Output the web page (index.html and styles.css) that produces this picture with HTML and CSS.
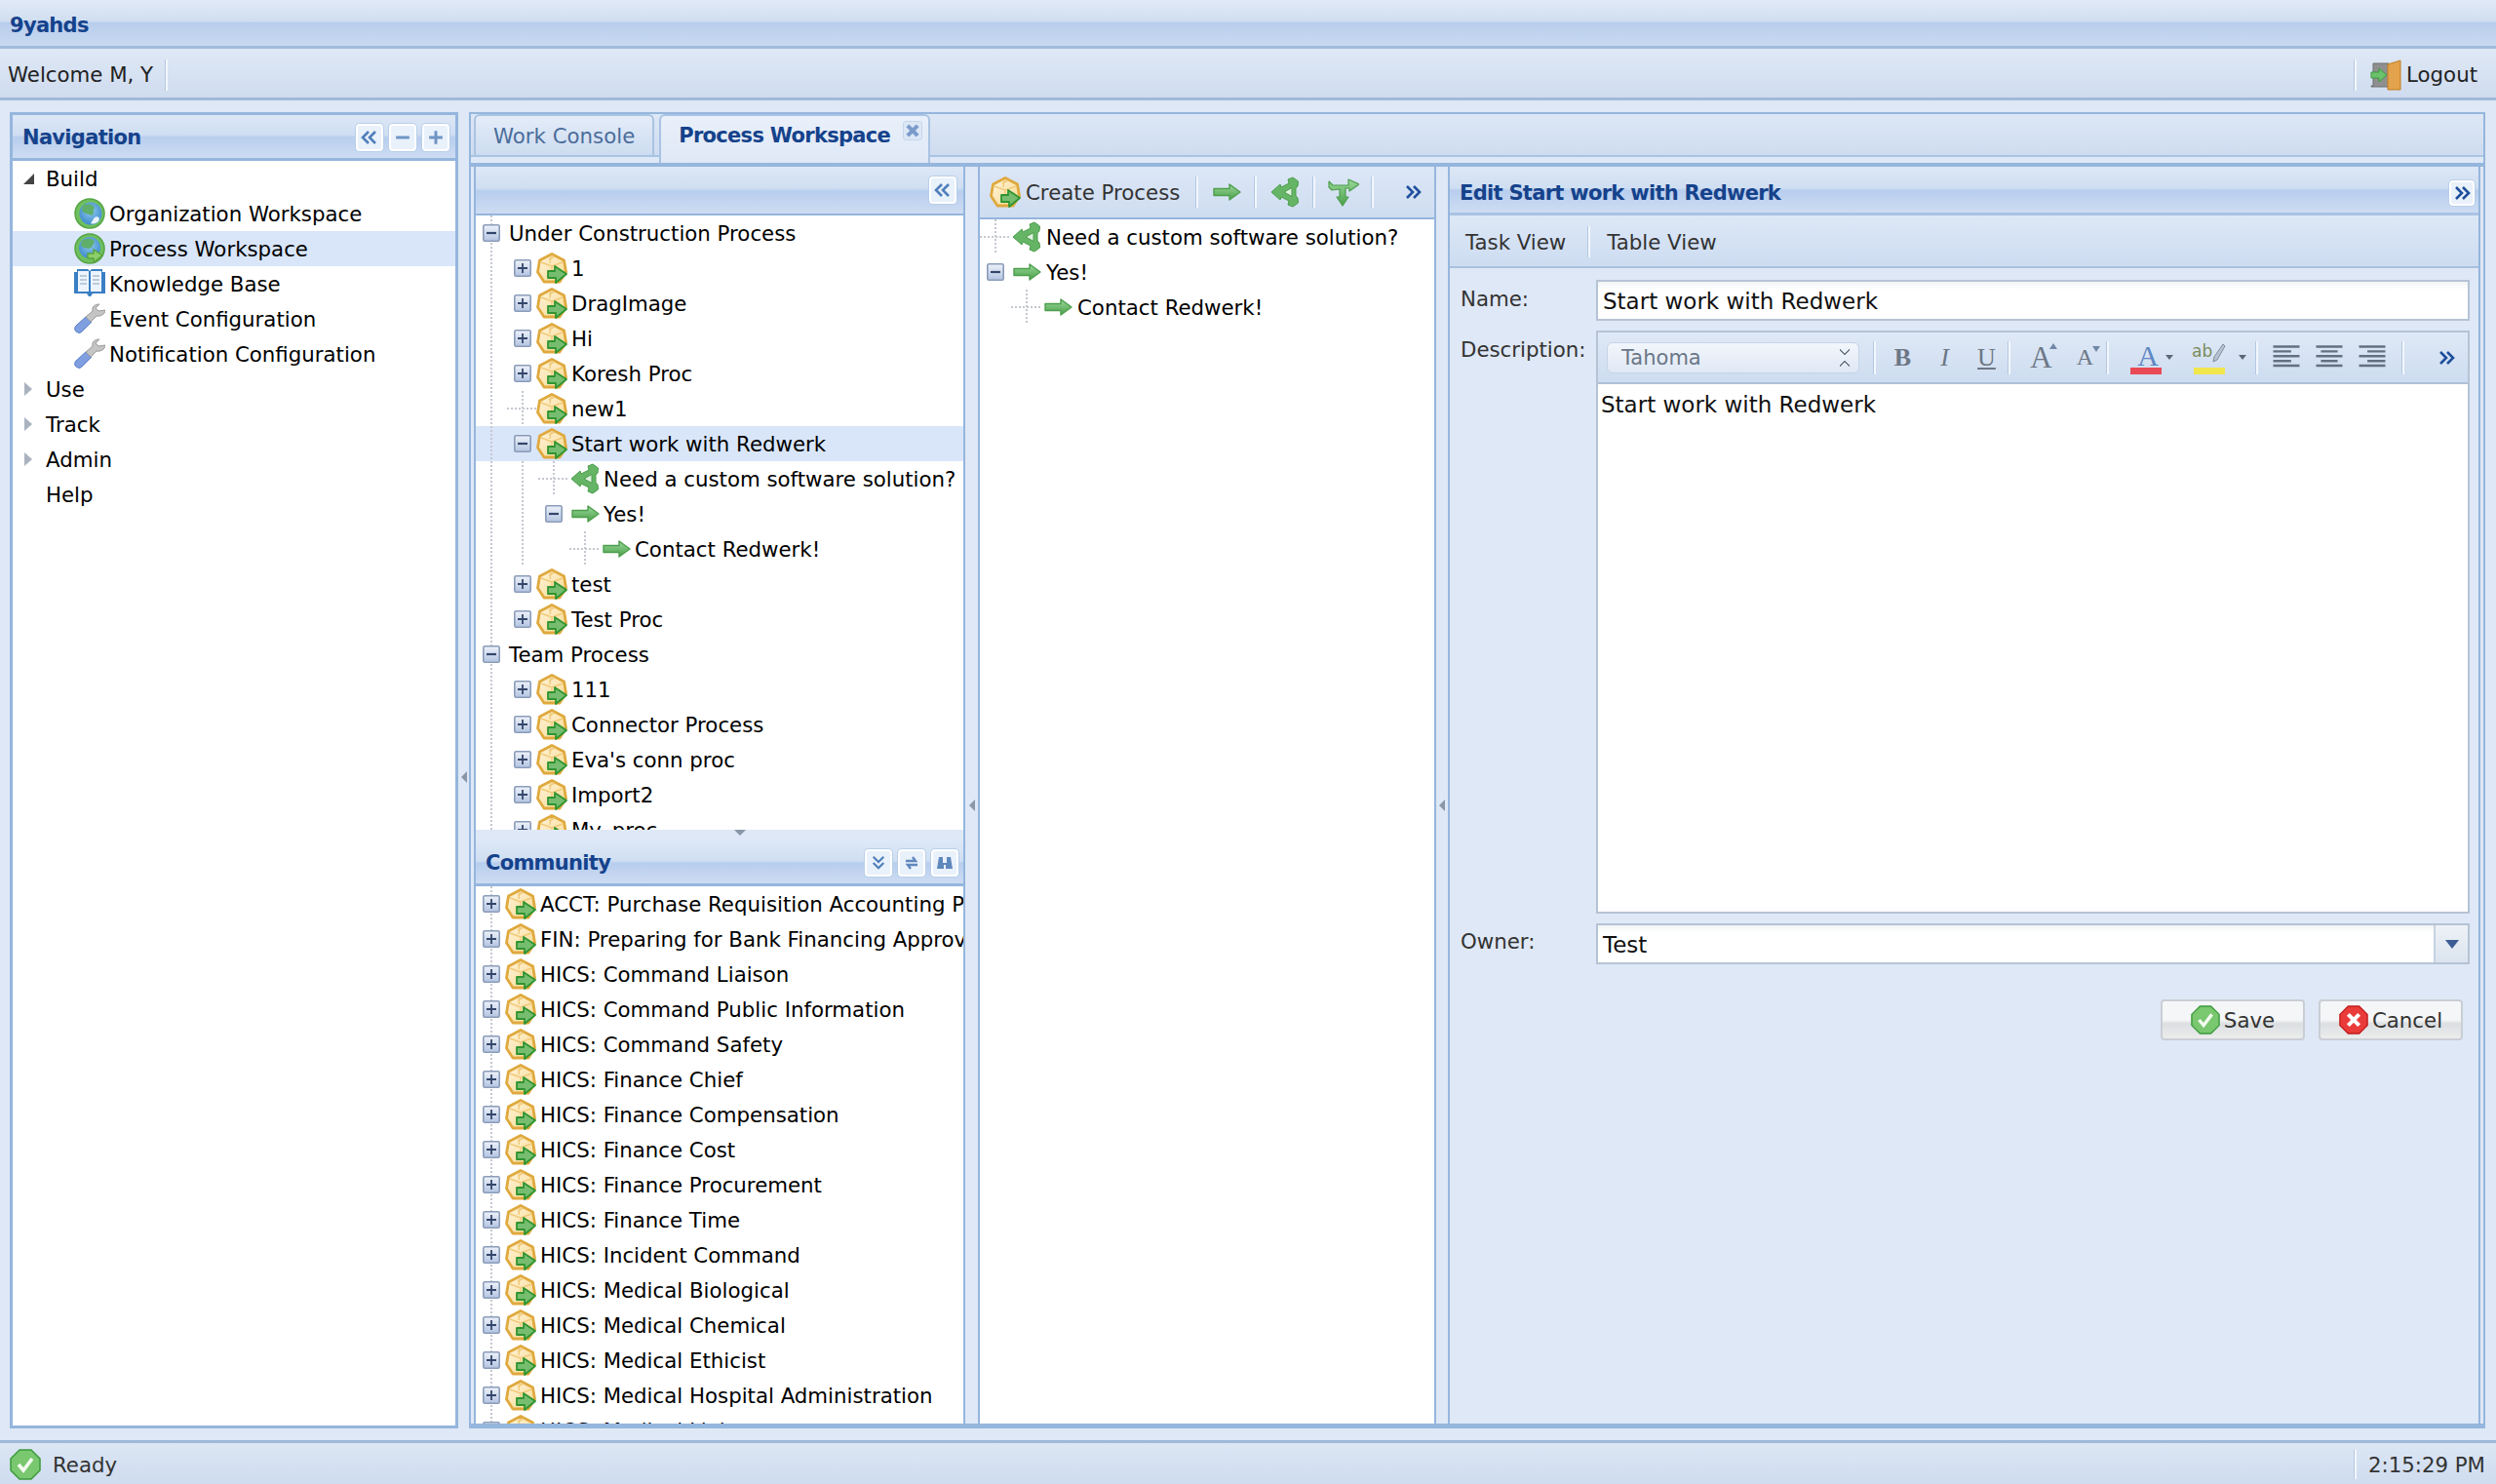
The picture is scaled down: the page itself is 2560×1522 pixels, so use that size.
FILE: index.html
```html
<!DOCTYPE html>
<html lang="en">
<head>
<meta charset="utf-8">
<title>9yahds</title>
<link rel="stylesheet" href="styles.css">
</head>
<body>
<svg class="defs" width="0" height="0">
  <defs>
    <linearGradient id="gGreen" x1="0" y1="0" x2="0" y2="1"><stop offset="0" stop-color="#9ad89a"/><stop offset="1" stop-color="#4aa04a"/></linearGradient>
    <linearGradient id="gGold" x1="0" y1="0" x2="1" y2="1"><stop offset="0" stop-color="#fff6df"/><stop offset="1" stop-color="#f8d78c"/></linearGradient>
    <linearGradient id="gEx" x1="0" y1="0" x2="0" y2="1"><stop offset="0" stop-color="#eef2fa"/><stop offset="1" stop-color="#b3c4e1"/></linearGradient>
    <radialGradient id="gBlue" cx=".5" cy=".4" r=".6"><stop offset="0" stop-color="#8fc8ef"/><stop offset="1" stop-color="#3d8bcb"/></radialGradient>
    <symbol id="i-proc" viewBox="0 0 32 32">
      <polygon points="16,1.5 28.5,8 30.5,20 24,30 8,30 1.5,20 3.5,8" fill="url(#gGold)" stroke="#dfa93e" stroke-width="2.8" stroke-linejoin="round"/>
      <path d="M5 10 L16 14 L27 10 M16 14 V22 M13 7 L19 4 M15 4 L14 11" fill="none" stroke="#f0ca7a" stroke-width="1.4"/>
      <path d="M12 19 H19 V14 L31 22 L20 31 V26 H12Z" fill="#76bd70" stroke="#2f942f" stroke-width="1.8" stroke-linejoin="round"/>
    </symbol>
    <symbol id="i-globe" viewBox="0 0 32 32">
      <circle cx="16" cy="16" r="15" fill="#6fbf5f" stroke="#55a545" stroke-width="1.5"/>
      <circle cx="17" cy="16" r="11.5" fill="url(#gBlue)"/>
      <path d="M9 8 C14 5 20 7 21 10 C18 14 22 15 18 18 C14 16 10 16 8 13Z" fill="#5fae6a"/>
      <path d="M21 20 C25 18 27 21 25 24 C22 27 18 27 17 26Z" fill="#e9f3fb"/>
    </symbol>
    <symbol id="i-globep" viewBox="0 0 32 32">
      <circle cx="16" cy="16" r="15" fill="#6fbf5f" stroke="#55a545" stroke-width="1.5"/>
      <circle cx="16" cy="15" r="11" fill="url(#gBlue)"/>
      <path d="M8 8 C14 4 20 6 21 9 C18 13 20 14 15 16 C12 15 9 15 7 13Z" fill="#5fae6a"/>
      <path d="M14 21 H20 V17 L29 23 L20 30 V26 H14Z" fill="#8ccf6a" stroke="#5ba53e" stroke-width="1.4"/>
    </symbol>
    <symbol id="i-book" viewBox="0 0 32 32">
      <path d="M0 4 H3 V1 H14 L16 3 L18 1 H29 V4 H32 V26 H19 L17 29 H15 L13 26 H0Z" fill="#3a7fc4"/>
      <path d="M4 3 H15 V24 H4Z M17 3 H28 V24 H17Z" fill="#eef4fb"/>
      <path d="M6 8 H13 M6 12 H13 M6 16 H13 M19 8 H26 M19 12 H26 M19 16 H26" stroke="#a9bdd2" stroke-width="1.6"/>
    </symbol>
    <symbol id="i-wrench" viewBox="0 0 32 32">
      <path d="M4 30 C0 29 0 25 2 23 L13 13 L18 19 L8 29 C7 30 5 31 4 30Z" fill="#7f9fe0" stroke="#5b7fc6" stroke-width="1"/>
      <path d="M12 14 L19 8 C18 4 21 1 26 1 L22 5 L25 8 L32 7 C32 11 27 14 23 13 L17 19Z" fill="#c4c4c4" stroke="#9a9a9a" stroke-width="1"/>
    </symbol>
    <symbol id="i-arrow" viewBox="0 0 32 32">
      <path d="M3 12.5 H19 V8 L30 16 L19 24 V19.5 H3Z" fill="url(#gGreen)" stroke="#4d9e4d" stroke-width="1.4" stroke-linejoin="round"/>
    </symbol>
    <symbol id="i-dec" viewBox="0 0 32 32">
      <path fill-rule="evenodd" d="M2 16 L11 8 L12 11 L20 7 L19 3 L24 1 L29.5 5 L29 10 L27 12 V20 L29 22 L29.5 27 L24 31 L19 29 L20 25 L12 21 L11 24Z" fill="#66b566" stroke="#4b9c4b" stroke-width="1" stroke-linejoin="round"/>
      <path d="M15 16 L23 11.5 V20.5Z" fill="#dff0df" stroke="#4b9c4b" stroke-width="1"/>
    </symbol>
    <symbol id="i-fork" viewBox="0 0 32 32">
      <path d="M1 5 L5 9 H21 V3 L32 8 L22 15 V12 H18 V21 H21 L15 30 L9 21 H12 V13 L4 14 L1 11Z" fill="url(#gGreen)" stroke="#4d9e4d" stroke-width="1.2" stroke-linejoin="round"/>
    </symbol>
    <symbol id="i-door" viewBox="0 0 32 32">
      <path d="M3 4 H19 V28 H1 V27 H3Z" fill="#8f8f8f" stroke="#6f6f6f" stroke-width="1"/>
      <path d="M18 5 L31 1 V31 H18Z" fill="#e3a24c" stroke="#c27e22" stroke-width="1"/>
      <path d="M1 13 H9 V9 L17 16 L9 23 V19 H1Z" fill="#6cc26c" stroke="#3d9b3d" stroke-width="1"/>
    </symbol>
    <symbol id="i-ok" viewBox="0 0 32 32">
      <polygon points="10,1 22,1 31,10 31,22 22,31 10,31 1,22 1,10" fill="#79c76f" stroke="#3d9b3d" stroke-width="1.5" stroke-linejoin="round"/>
      <path d="M9 16 L14 22 L23 10" fill="none" stroke="#f2faf0" stroke-width="3.6"/>
    </symbol>
    <symbol id="i-no" viewBox="0 0 32 32">
      <polygon points="10,1 22,1 31,10 31,22 22,31 10,31 1,22 1,10" fill="#ea3b3b" stroke="#c21d1d" stroke-width="1.5" stroke-linejoin="round"/>
      <path d="M10 10 L22 22 M22 10 L10 22" fill="none" stroke="#fff" stroke-width="4.4"/>
    </symbol>
    <symbol id="x-plus" viewBox="0 0 18 18">
      <rect x=".8" y=".8" width="16.4" height="16.4" rx="1.5" fill="url(#gEx)" stroke="#8b9cb9" stroke-width="1.6"/>
      <path d="M4 9 H14 M9 4 V14" stroke="#34466b" stroke-width="1.8"/>
    </symbol>
    <symbol id="x-minus" viewBox="0 0 18 18">
      <rect x=".8" y=".8" width="16.4" height="16.4" rx="1.5" fill="url(#gEx)" stroke="#8b9cb9" stroke-width="1.6"/>
      <path d="M4 9 H14" stroke="#34466b" stroke-width="2.2"/>
    </symbol>
    <symbol id="c-left" viewBox="0 0 18 14"><path d="M8 1 L2 7 L8 13 M15 1 L9 7 L15 13" fill="none" stroke="#4f7fba" stroke-width="2.6"/></symbol>
    <symbol id="c-right" viewBox="0 0 18 14"><path d="M3 1 L9 7 L3 13 M10 1 L16 7 L10 13" fill="none" stroke="#1f4f9c" stroke-width="2.6"/></symbol>
    <symbol id="c-down" viewBox="0 0 16 18"><path d="M2 2 L8 8 L14 2 M2 9 L8 15 L14 9" fill="none" stroke="#4f7fba" stroke-width="2.4"/></symbol>
    <symbol id="c-sync" viewBox="0 0 16 16"><path d="M2 6 H12 L9 2 M14 10 H4 L7 14" fill="none" stroke="#5f88bd" stroke-width="2.4"/></symbol>
    <symbol id="c-bino" viewBox="0 0 18 16"><path d="M3 2 H7 V8 H11 V2 H15 L17 14 H10 V10 H8 V14 H1Z" fill="#5f88bd"/></symbol>
    <symbol id="c-minus" viewBox="0 0 14 14"><path d="M1 7 H13" stroke="#6f95c5" stroke-width="2.6"/></symbol>
    <symbol id="c-plus" viewBox="0 0 14 14"><path d="M1 7 H13 M7 1 V13" stroke="#6f95c5" stroke-width="2.6"/></symbol>
    <symbol id="c-x" viewBox="0 0 14 14"><path d="M3 3 L11 11 M11 3 L3 11" stroke="#7b9ccb" stroke-width="3.2"/></symbol>
    <symbol id="a-l" viewBox="0 0 24 22"><path d="M1 2 H23 M1 6 H16 M1 10 H23 M1 14 H16 M1 18 H23" stroke="#62707f" stroke-width="2"/></symbol>
    <symbol id="a-c" viewBox="0 0 24 22"><path d="M1 2 H23 M5 6 H19 M1 10 H23 M5 14 H19 M1 18 H23" stroke="#62707f" stroke-width="2"/></symbol>
    <symbol id="a-r" viewBox="0 0 24 22"><path d="M1 2 H23 M8 6 H23 M1 10 H23 M8 14 H23 M1 18 H23" stroke="#62707f" stroke-width="2"/></symbol>
    <symbol id="pen" viewBox="0 0 14 20"><path d="M11 1 L13 3 L5 17 L1 19 L2 14Z" fill="#b9c4d2" stroke="#7f8a9a"/></symbol>
  </defs>
</svg>

<header class="appbar"><span class="apptitle">9yahds</span></header>

<div class="topbar">
  <span class="welcome">Welcome M, Y</span>
  <span class="sep"></span>
  <span class="grow"></span>
  <span class="sep"></span>
  <svg class="ico ico-logout"><use href="#i-door"/></svg>
  <span class="logout">Logout</span>
</div>

<main class="main">
  <aside class="west">
    <div class="phead navhead">
      <span class="ptitle">Navigation</span>
      <span class="tools">
        <span class="tool"><svg class="tg"><use href="#c-left"/></svg></span>
        <span class="tool"><svg class="tg"><use href="#c-minus"/></svg></span>
        <span class="tool"><svg class="tg"><use href="#c-plus"/></svg></span>
      </span>
    </div>
    <div class="navtree">
      <div class="nrow"><span class="tri tri-open"></span><span>Build</span></div>
      <div class="nrow sub"><svg class="ico"><use href="#i-globe"/></svg><span>Organization Workspace</span></div>
      <div class="nrow sub on"><svg class="ico"><use href="#i-globep"/></svg><span>Process Workspace</span></div>
      <div class="nrow sub"><svg class="ico"><use href="#i-book"/></svg><span>Knowledge Base</span></div>
      <div class="nrow sub"><svg class="ico"><use href="#i-wrench"/></svg><span>Event Configuration</span></div>
      <div class="nrow sub"><svg class="ico"><use href="#i-wrench"/></svg><span>Notification Configuration</span></div>
      <div class="nrow"><span class="tri tri-closed"></span><span>Use</span></div>
      <div class="nrow"><span class="tri tri-closed"></span><span>Track</span></div>
      <div class="nrow"><span class="tri tri-closed"></span><span>Admin</span></div>
      <div class="nrow"><span class="tri"></span><span>Help</span></div>
    </div>
  </aside>

  <span class="vsplit west-split"><span class="mini"></span></span>

  <section class="center">
    <div class="tabstrip">
      <span class="tab">Work Console</span>
      <span class="tab tab-on">Process Workspace<svg class="tabx"><use href="#c-x"/></svg></span>
    </div>
    <div class="tabbody">
      <div class="leftcol">
        <div class="emptyhead"><span class="tool"><svg class="tg"><use href="#c-left"/></svg></span></div>
        <div class="tree upper">
          <div class="trow"><span class="c c-v0"><svg class="ex"><use href="#x-minus"/></svg></span><span class="txt0">Under Construction Process</span></div>
          <div class="trow"><span class="c v"></span><span class="c"><svg class="ex"><use href="#x-plus"/></svg></span><svg class="ico pi"><use href="#i-proc"/></svg><span class="tx">1</span></div>
          <div class="trow"><span class="c v"></span><span class="c"><svg class="ex"><use href="#x-plus"/></svg></span><svg class="ico pi"><use href="#i-proc"/></svg><span class="tx">DragImage</span></div>
          <div class="trow"><span class="c v"></span><span class="c"><svg class="ex"><use href="#x-plus"/></svg></span><svg class="ico pi"><use href="#i-proc"/></svg><span class="tx">Hi</span></div>
          <div class="trow"><span class="c v"></span><span class="c"><svg class="ex"><use href="#x-plus"/></svg></span><svg class="ico pi"><use href="#i-proc"/></svg><span class="tx">Koresh Proc</span></div>
          <div class="trow"><span class="c v"></span><span class="c t"></span><svg class="ico pi"><use href="#i-proc"/></svg><span class="tx">new1</span></div>
          <div class="trow on"><span class="c v"></span><span class="c"><svg class="ex"><use href="#x-minus"/></svg></span><svg class="ico pi"><use href="#i-proc"/></svg><span class="tx">Start work with Redwerk</span></div>
          <div class="trow"><span class="c v"></span><span class="c v"></span><span class="c t"></span><svg class="ico"><use href="#i-dec"/></svg><span class="tx">Need a custom software solution?</span></div>
          <div class="trow"><span class="c v"></span><span class="c v"></span><span class="c"><svg class="ex"><use href="#x-minus"/></svg></span><svg class="ico"><use href="#i-arrow"/></svg><span class="tx">Yes!</span></div>
          <div class="trow"><span class="c v"></span><span class="c v"></span><span class="c"></span><span class="c e"></span><svg class="ico"><use href="#i-arrow"/></svg><span class="tx">Contact Redwerk!</span></div>
          <div class="trow"><span class="c v"></span><span class="c"><svg class="ex"><use href="#x-plus"/></svg></span><svg class="ico pi"><use href="#i-proc"/></svg><span class="tx">test</span></div>
          <div class="trow"><span class="c v"></span><span class="c"><svg class="ex"><use href="#x-plus"/></svg></span><svg class="ico pi"><use href="#i-proc"/></svg><span class="tx">Test Proc</span></div>
          <div class="trow"><span class="c c-v0"><svg class="ex"><use href="#x-minus"/></svg></span><span class="txt0">Team Process</span></div>
          <div class="trow"><span class="c v"></span><span class="c"><svg class="ex"><use href="#x-plus"/></svg></span><svg class="ico pi"><use href="#i-proc"/></svg><span class="tx">111</span></div>
          <div class="trow"><span class="c v"></span><span class="c"><svg class="ex"><use href="#x-plus"/></svg></span><svg class="ico pi"><use href="#i-proc"/></svg><span class="tx">Connector Process</span></div>
          <div class="trow"><span class="c v"></span><span class="c"><svg class="ex"><use href="#x-plus"/></svg></span><svg class="ico pi"><use href="#i-proc"/></svg><span class="tx">Eva's conn proc</span></div>
          <div class="trow"><span class="c v"></span><span class="c"><svg class="ex"><use href="#x-plus"/></svg></span><svg class="ico pi"><use href="#i-proc"/></svg><span class="tx">Import2</span></div>
          <div class="trow"><span class="c v"></span><span class="c"><svg class="ex"><use href="#x-plus"/></svg></span><svg class="ico pi"><use href="#i-proc"/></svg><span class="tx">My_proc</span></div>
        </div>
        <div class="hsplit"><span class="hmini"></span></div>
        <div class="phead comm">
          <span class="ptitle">Community</span>
          <span class="tools">
            <span class="tool"><svg class="tg"><use href="#c-down"/></svg></span>
            <span class="tool"><svg class="tg"><use href="#c-sync"/></svg></span>
            <span class="tool"><svg class="tg"><use href="#c-bino"/></svg></span>
          </span>
        </div>
        <div class="tree lower">
          <div class="trow"><span class="c v"><svg class="ex"><use href="#x-plus"/></svg></span><svg class="ico pi"><use href="#i-proc"/></svg><span class="tx">ACCT: Purchase Requisition Accounting Process</span></div>
          <div class="trow"><span class="c v"><svg class="ex"><use href="#x-plus"/></svg></span><svg class="ico pi"><use href="#i-proc"/></svg><span class="tx">FIN: Preparing for Bank Financing Approval</span></div>
          <div class="trow"><span class="c v"><svg class="ex"><use href="#x-plus"/></svg></span><svg class="ico pi"><use href="#i-proc"/></svg><span class="tx">HICS: Command Liaison</span></div>
          <div class="trow"><span class="c v"><svg class="ex"><use href="#x-plus"/></svg></span><svg class="ico pi"><use href="#i-proc"/></svg><span class="tx">HICS: Command Public Information</span></div>
          <div class="trow"><span class="c v"><svg class="ex"><use href="#x-plus"/></svg></span><svg class="ico pi"><use href="#i-proc"/></svg><span class="tx">HICS: Command Safety</span></div>
          <div class="trow"><span class="c v"><svg class="ex"><use href="#x-plus"/></svg></span><svg class="ico pi"><use href="#i-proc"/></svg><span class="tx">HICS: Finance Chief</span></div>
          <div class="trow"><span class="c v"><svg class="ex"><use href="#x-plus"/></svg></span><svg class="ico pi"><use href="#i-proc"/></svg><span class="tx">HICS: Finance Compensation</span></div>
          <div class="trow"><span class="c v"><svg class="ex"><use href="#x-plus"/></svg></span><svg class="ico pi"><use href="#i-proc"/></svg><span class="tx">HICS: Finance Cost</span></div>
          <div class="trow"><span class="c v"><svg class="ex"><use href="#x-plus"/></svg></span><svg class="ico pi"><use href="#i-proc"/></svg><span class="tx">HICS: Finance Procurement</span></div>
          <div class="trow"><span class="c v"><svg class="ex"><use href="#x-plus"/></svg></span><svg class="ico pi"><use href="#i-proc"/></svg><span class="tx">HICS: Finance Time</span></div>
          <div class="trow"><span class="c v"><svg class="ex"><use href="#x-plus"/></svg></span><svg class="ico pi"><use href="#i-proc"/></svg><span class="tx">HICS: Incident Command</span></div>
          <div class="trow"><span class="c v"><svg class="ex"><use href="#x-plus"/></svg></span><svg class="ico pi"><use href="#i-proc"/></svg><span class="tx">HICS: Medical Biological</span></div>
          <div class="trow"><span class="c v"><svg class="ex"><use href="#x-plus"/></svg></span><svg class="ico pi"><use href="#i-proc"/></svg><span class="tx">HICS: Medical Chemical</span></div>
          <div class="trow"><span class="c v"><svg class="ex"><use href="#x-plus"/></svg></span><svg class="ico pi"><use href="#i-proc"/></svg><span class="tx">HICS: Medical Ethicist</span></div>
          <div class="trow"><span class="c v"><svg class="ex"><use href="#x-plus"/></svg></span><svg class="ico pi"><use href="#i-proc"/></svg><span class="tx">HICS: Medical Hospital Administration</span></div>
          <div class="trow"><span class="c v"><svg class="ex"><use href="#x-plus"/></svg></span><svg class="ico pi"><use href="#i-proc"/></svg><span class="tx">HICS: Medical Liaison</span></div>
        </div>
      </div>

      <span class="vsplit inner-split"><span class="mini"></span></span>

      <div class="midcol">
        <div class="midbar">
          <svg class="ico"><use href="#i-proc"/></svg><span class="create">Create Process</span>
          <span class="sep"></span>
          <svg class="ico"><use href="#i-arrow"/></svg>
          <span class="sep"></span>
          <svg class="ico"><use href="#i-dec"/></svg>
          <span class="sep"></span>
          <svg class="ico"><use href="#i-fork"/></svg>
          <span class="sep"></span>
          <svg class="more"><use href="#c-right"/></svg>
        </div>
        <div class="tree midtree">
          <div class="trow"><span class="c e"></span><svg class="ico"><use href="#i-dec"/></svg><span class="tx tx2">Need a custom software solution?</span></div>
          <div class="trow"><span class="c"><svg class="ex"><use href="#x-minus"/></svg></span><svg class="ico"><use href="#i-arrow"/></svg><span class="tx tx2">Yes!</span></div>
          <div class="trow"><span class="c"></span><span class="c e"></span><svg class="ico"><use href="#i-arrow"/></svg><span class="tx tx2">Contact Redwerk!</span></div>
        </div>
      </div>

      <span class="vsplit inner-split last"><span class="mini"></span></span>

      <div class="rightcol">
        <div class="phead rhead">
          <span class="ptitle">Edit Start work with Redwerk</span>
          <span class="tool tool-n"><svg class="tg"><use href="#c-right"/></svg></span>
        </div>
        <div class="viewbar">
          <span class="vtask">Task View</span><span class="sep"></span><span>Table View</span>
        </div>
        <form class="form">
          <div class="frow name"><label>Name:</label><div class="field">Start work with Redwerk</div></div>
          <div class="frow desc">
            <label>Description:</label>
            <div class="editor">
              <div class="edbar">
                <span class="fontsel"><span>Tahoma</span><span class="updown"></span></span>
                <span class="sep"></span>
                <span class="eb eb-b">B</span>
                <span class="eb eb-i">I</span>
                <span class="eb eb-u">U</span>
                <span class="sep"></span>
                <span class="eb eb-a1">A<i class="up"></i></span>
                <span class="eb eb-a2">A<i class="dn"></i></span>
                <span class="sep"></span>
                <span class="eb eb-col">A<i class="car"></i></span>
                <span class="eb eb-hi"><span class="ab">ab</span><svg class="pen"><use href="#pen"/></svg><i class="car"></i></span>
                <span class="sep"></span>
                <svg class="al"><use href="#a-l"/></svg>
                <svg class="al"><use href="#a-c"/></svg>
                <svg class="al"><use href="#a-r"/></svg>
                <span class="sep"></span>
                <svg class="more"><use href="#c-right"/></svg>
              </div>
              <div class="edtext">Start work with Redwerk</div>
            </div>
          </div>
          <div class="frow owner"><label>Owner:</label><div class="field combo"><span class="comboval">Test</span><span class="trigger"><i></i></span></div></div>
          <div class="btns">
            <span class="btn"><svg class="bi"><use href="#i-ok"/></svg>Save</span>
            <span class="btn"><svg class="bi"><use href="#i-no"/></svg>Cancel</span>
          </div>
        </form>
      </div>
    </div>
  </section>
</main>

<footer class="status">
  <svg class="ico st-ico"><use href="#i-ok"/></svg><span class="ready">Ready</span>
  <span class="grow"></span>
  <span class="sep"></span>
  <span class="clock">2:15:29 PM</span>
</footer>
</body>
</html>
```
FILE: styles.css
```css
* { box-sizing: border-box; }
html, body { height: 100%; }
body {
  margin: 0;
  height: 1522px;
  width: 2560px;
  overflow: hidden;
  display: flex;
  flex-direction: column;
  background: #dfe8f6;
  font-family: "DejaVu Sans", "Liberation Sans", sans-serif;
  font-size: 21.3px;
  color: #000;
}
.defs { position: absolute; }
.grow { flex: 1; }
.ico { width: 32px; height: 32px; flex: none; display: block; }

.appbar {
  height: 50px;
  flex: none;
  display: flex;
  align-items: center;
  padding: 5px 0 0 10px;
  background: linear-gradient(#e1eaf7 0, #d0deef 22px, #b9ceed 23px, #c8d9f0 47px);
  border-bottom: 3px solid #a1bcdc;
}
.apptitle { color: #15428b; font-weight: 700; font-size: 21px; letter-spacing: -0.7px; }

.topbar {
  height: 53px;
  flex: none;
  display: flex;
  align-items: center;
  padding: 3px 19px 0 8px;
  background: linear-gradient(#dfe8f5, #cfdcef);
  border-bottom: 3px solid #9fb9d9;
  color: #222;
}
.sep {
  display: block;
  width: 3px;
  height: 32px;
  flex: none;
  background: linear-gradient(90deg, #b4c8e2 0 1px, #f2f7fd 1px 3px);
}
.welcome { margin-right: 12px; }
.ico-logout { margin: 0 5px 0 14px; }

.main {
  flex: 1;
  min-height: 0;
  display: flex;
  padding: 12px 11px 12px 10px;
}

.west {
  width: 460px;
  flex: none;
  display: flex;
  flex-direction: column;
  border: 3px solid #95b6dd;
  background: #fff;
}
.phead {
  flex: none;
  height: 47px;
  display: flex;
  align-items: center;
  justify-content: space-between;
  padding: 0 6px 0 10px;
  background: linear-gradient(#dde8f6 0, #cfdef2 46%, #b8ceee 52%, #cddcf2 100%);
  border-bottom: 3px solid #95b6dd;
}
.navhead { padding-top: 2px; }
.ptitle { color: #15428b; font-weight: 700; font-size: 21px; letter-spacing: -0.7px; }
.tools { display: flex; gap: 6px; }
.tool {
  width: 28px;
  height: 28px;
  flex: none;
  display: flex;
  align-items: center;
  justify-content: center;
  background: #e9f1fb;
  border: 2px solid #fff;
  border-radius: 4px;
  box-shadow: 0 0 0 1px #b9cfea;
}
.tg { width: 18px; height: 16px; display: block; }

.navtree { flex: 1; }
.nrow { height: 36px; display: flex; align-items: center; padding-left: 8px; }
.nrow.sub { padding-left: 63px; }
.nrow.sub span { margin-left: 4px; }
.nrow.on { background: #d9e6f9; }
.tri { width: 26px; height: 14px; flex: none; }
.tri-open::before {
  content: "";
  display: block;
  margin-left: 3px;
  width: 0; height: 0;
  border-bottom: 11px solid #444;
  border-left: 11px solid transparent;
  margin-top: 2px;
}
.tri-closed::before {
  content: "";
  display: block;
  margin-left: 4px;
  width: 0; height: 0;
  border-left: 8px solid #aab3bf;
  border-top: 7px solid transparent;
  border-bottom: 7px solid transparent;
}

.vsplit {
  flex: none;
  width: 13px;
  display: flex;
  align-items: center;
  justify-content: center;
}
.west-split { width: 11px; padding-top: 14px; }
.inner-split { padding-top: 20px; }
.inner-split.last { width: 12px; }
.mini {
  width: 0; height: 0;
  border-right: 6px solid #8a97a8;
  border-top: 6px solid transparent;
  border-bottom: 6px solid transparent;
}

.center {
  flex: 1;
  min-width: 0;
  display: flex;
  flex-direction: column;
  border-left: 2px solid #95b6dd;
  border-top: 2px solid #95b6dd;
  border-right: 2px solid #95b6dd;
  border-bottom: 5px solid #95b6dd;
}
.tabstrip {
  flex: none;
  height: 54px;
  display: flex;
  align-items: flex-end;
  gap: 5px;
  padding-left: 3px;
  background: linear-gradient(#dde7f5, #cedcf0 44px);
  border-bottom: 4px solid #95b6dd;
  box-shadow: inset 0 -6px 0 #dfe8f6, inset 0 -8px 0 #a9c3e3;
}
.tab {
  height: 42px;
  display: flex;
  align-items: center;
  padding: 0 18px;
  margin-bottom: 8px;
  color: #4a6d9b;
  font-size: 21.3px;
  border: 2px solid #a9c3e3;
  border-bottom: 0;
  border-radius: 6px 6px 0 0;
  background: linear-gradient(#e4ecf8, #cddcf0);
}
.tab-on {
  position: relative;
  height: 50px;
  margin-bottom: 0;
  padding: 0 39px 8px 18px;
  color: #15428b;
  font-weight: 700;
  font-size: 21px;
  letter-spacing: -0.7px;
  background: linear-gradient(#e9f0fa, #dfe8f6);
}
.tabx {
  width: 20px;
  height: 20px;
  position: absolute;
  right: 6px;
  top: 5px;
  background: #dce7f6;
  border: 1px solid #c5d6ec;
  border-radius: 3px;
}

.tabbody { flex: 1; min-height: 0; display: flex; padding: 0 3px 0 3px; background: #dfe8f6; }
.leftcol {
  width: 504px;
  flex: none;
  display: flex;
  flex-direction: column;
  background: #fff;
  border-left: 2px solid #95b6dd;
  border-right: 2px solid #95b6dd;
}
.emptyhead {
  flex: none;
  height: 50px;
  display: flex;
  align-items: center;
  justify-content: flex-end;
  padding-right: 7px;
  background: linear-gradient(#dde8f6 0, #cfdef2 46%, #b8ceee 52%, #cddcf2 100%);
  border-bottom: 2px solid #95b6dd;
}
.tree { overflow: hidden; background: #fff; }
.upper { height: 630px; flex: none; }
.lower { flex: 1; min-height: 0; }
.hsplit {
  flex: none;
  height: 12px;
  display: flex;
  justify-content: center;
  background: #dfe8f6;
}
.hmini {
  margin-left: 42px;
  width: 0; height: 0;
  border-top: 6px solid #8a97a8;
  border-left: 6px solid transparent;
  border-right: 6px solid transparent;
}
.comm { height: 46px; padding-right: 5px; }
.trow {
  height: 36px;
  display: flex;
  align-items: center;
  white-space: nowrap;
}
.trow.on { background: #d9e6f9; }
.c {
  width: 32px;
  height: 36px;
  flex: none;
  display: flex;
  align-items: center;
  justify-content: center;
  background-repeat: no-repeat;
}
.c-v0 { background-image: linear-gradient(#c4c8d0 50%, transparent 50%); background-size: 2px 4px; background-position: center 20px; background-repeat: repeat-y; }
.v { background-image: linear-gradient(#c4c8d0 50%, transparent 50%); background-size: 2px 4px; background-position: center; background-repeat: repeat-y; }
.t, .e {
  background-image: linear-gradient(#c4c8d0 50%, transparent 50%), linear-gradient(90deg, #c4c8d0 50%, transparent 50%);
  background-size: 2px 4px, 4px 2px;
  background-position: center top, right center;
  background-repeat: repeat-y, repeat-x;
}
.ex { width: 18px; height: 18px; display: block; }
.txt0 { margin-left: 2px; }
.tx { margin-left: 3px; }
.pi { margin-left: -2px; }
.pi + .tx { margin-left: 4px; }
.tx2 { margin-left: 4px; }

.midcol {
  width: 470px;
  flex: none;
  display: flex;
  flex-direction: column;
  background: #fff;
  border-left: 2px solid #95b6dd;
  border-right: 2px solid #95b6dd;
}
.midbar {
  flex: none;
  height: 54px;
  display: flex;
  align-items: center;
  padding-left: 10px;
  gap: 12.5px;
  background: linear-gradient(#dce7f6, #cfddf1);
  border-bottom: 2px solid #95b6dd;
}
.create { color: #333; margin-left: -7.5px; margin-right: 3.5px; }
.more { width: 18px; height: 16px; flex: none; display: block; }
.midbar .more { margin-left: 18px; }
.midtree { flex: 1; }

.rightcol {
  flex: 1;
  min-width: 0;
  display: flex;
  flex-direction: column;
  border-left: 2px solid #95b6dd;
  border-right: 2px solid #95b6dd;
  background: #dfe8f6;
}
.rhead { height: 50px; padding: 6px 4px 0 10px; border-bottom: 3px solid #a9c3e3; }
.tool-n { width: 26px; height: 26px; }
.viewbar {
  flex: none;
  height: 54px;
  display: flex;
  align-items: center;
  gap: 17px;
  padding: 2px 0 0 16px;
  color: #333;
  background: linear-gradient(#dde8f6, #cddcf1);
  border-bottom: 2px solid #a9c0dc;
}
.vtask { margin-right: 5px; }
.form { flex: 1; display: flex; flex-direction: column; padding: 12px 9px 0 11px; }
.frow { display: flex; }
.frow label { width: 139px; flex: none; color: #333; }
.field {
  flex: 1;
  height: 42px;
  display: flex;
  align-items: center;
  padding: 2px 0 0 5px;
  background: linear-gradient(#f1f3f5, #fff 8px);
  border: 2px solid #b5c3d4;
  font-size: 23px;
  color: #111;
}
.name label { padding-top: 7px; }
.desc { margin-top: 10px; }
.desc label { padding-top: 7px; }
.editor { flex: 1; height: 598px; display: flex; flex-direction: column; border: 2px solid #b5c3d4; background: #fff; }
.edbar {
  flex: none;
  height: 53px;
  display: flex;
  align-items: center;
  padding-left: 9px;
  background: linear-gradient(#dfe9f6, #cddcf0);
  border-bottom: 2px solid #aec0d6;
  color: #62707f;
}
.edtext { flex: 1; padding: 8px 3px; font-size: 23px; color: #111; }
.fontsel {
  width: 259px;
  height: 32px;
  flex: none;
  display: flex;
  align-items: center;
  justify-content: space-between;
  padding: 0 9px 0 14px;
  background: linear-gradient(#f2f6fc, #dfe8f5);
  border: 1px solid #c6d4e6;
  border-radius: 6px;
  font-size: 21px;
  color: #6b7787;
  margin-right: 14px;
}
.updown { width: 10px; height: 18px; background:
  linear-gradient(45deg, transparent 48%, #6f7a88 48% 60%, transparent 60%) 0 0 / 5px 7px no-repeat,
  linear-gradient(-45deg, transparent 48%, #6f7a88 48% 60%, transparent 60%) 5px 0 / 5px 7px no-repeat,
  linear-gradient(135deg, transparent 48%, #6f7a88 48% 60%, transparent 60%) 0 11px / 5px 7px no-repeat,
  linear-gradient(-135deg, transparent 48%, #6f7a88 48% 60%, transparent 60%) 5px 11px / 5px 7px no-repeat;
}
.edbar .sep { height: 34px; }
.eb {
  flex: none;
  position: relative;
  width: 43px;
  text-align: center;
  font-family: "Liberation Serif", serif;
  font-size: 26px;
  color: #6d7785;
}
.eb-b { font-weight: 700; margin-left: 6px; }
.eb-i { font-style: italic; }
.eb-u { text-decoration: underline; }
.eb-a1 { font-size: 31px; margin-left: 10px; }
.eb-a2 { font-size: 24px; margin-left: 2px; }
.eb i { position: absolute; width: 0; height: 0; border-left: 4px solid transparent; border-right: 4px solid transparent; }
.eb .up { right: 5px; top: 3px; border-bottom: 6px solid #7288a8; }
.eb .dn { right: 6px; top: 2px; border-top: 6px solid #7288a8; }
.eb .car { right: 0; top: 14px; border-top: 5px solid #5c6776; }
.eb-col { width: 52px; margin-left: 14px; font-size: 30px; color: #5f86c4; line-height: 30px; background: linear-gradient(#ea4a55, #ea4a55) 8px 100% / 32px 7px no-repeat; height: 34px; }
.eb-hi { width: 56px; height: 34px; margin: 0 9px 0 19px; font-size: 20px; background: linear-gradient(#f2e64d, #f2e64d) 2px 100% / 32px 7px no-repeat; display: flex; }
.eb-hi .ab { color: #7b8c5c; font-family: "DejaVu Sans", sans-serif; font-size: 17px; line-height: 20px; }
.pen { width: 14px; height: 24px; }
.al { width: 30px; height: 27px; flex: none; margin-left: 14px; }
.al + .sep { margin-left: 15px; }
.edbar .more { margin-left: 34px; }
.owner { margin-top: 10px; }
.owner label { padding-top: 6px; }
.combo { padding-right: 0; padding-top: 0; }
.comboval { flex: 1; padding-top: 2px; }
.trigger { width: 35px; height: 100%; background: linear-gradient(#eef2f7, #dbe4ef); border-left: 2px solid #c6d2e0; display: flex; align-items: center; justify-content: center; }
.trigger i { width: 14px; height: 9px; border-top: 9px solid #3c5c94; border-left: 7px solid transparent; border-right: 7px solid transparent; display: block; }
.btns { display: flex; justify-content: flex-end; gap: 14px; margin-top: 36px; padding-right: 7px; }
.btn {
  width: 148px;
  height: 42px;
  display: flex;
  align-items: center;
  justify-content: center;
  gap: 4px;
  color: #333;
  border: 2px solid #c9ced5;
  border-radius: 4px;
  background: linear-gradient(#f5f6f7 0 50%, #dcdfe2 60%, #ececec 100%);
}
.bi { width: 30px; height: 30px; }

.status {
  flex: none;
  height: 45px;
  display: flex;
  align-items: center;
  padding: 2px 11px 0 10px;
  background: linear-gradient(#dce6f4, #cfdcef);
  border-top: 3px solid #9fb9d9;
  color: #333;
}
.st-ico { margin-right: 12px; }
.status .sep { height: 30px; margin-right: 12px; }
```
